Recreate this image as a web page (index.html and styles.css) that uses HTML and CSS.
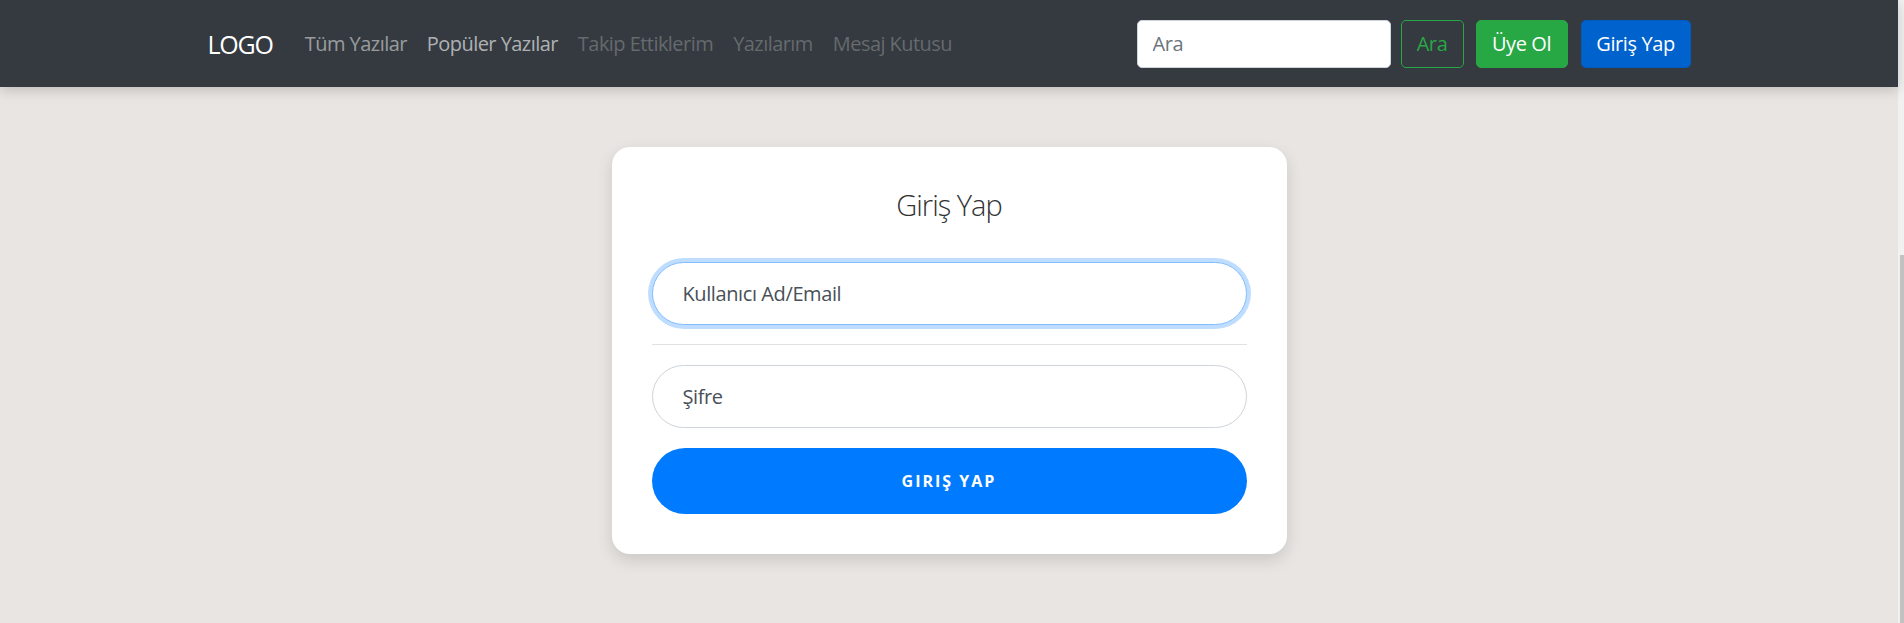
FILE: index.html
```html
<!DOCTYPE html>
<html>
<head>
<meta charset="utf-8">
<title>Giriş Yap</title>
<link rel="stylesheet" href="styles.css">
</head>
<body>
<div class="page">
  <header class="navbar">
    <div class="nav-inner">
      <a class="brand" href="#">LOGO</a>
      <nav class="nav-links">
        <a class="nav-link" href="#">Tüm Yazılar</a>
        <a class="nav-link nav-link-hover" href="#">Popüler Yazılar</a>
        <a class="nav-link nav-link-disabled" href="#">Takip Ettiklerim</a>
        <a class="nav-link nav-link-disabled" href="#">Yazılarım</a>
        <a class="nav-link nav-link-disabled" href="#">Mesaj Kutusu</a>
      </nav>
      <form class="nav-search">
        <input class="search-input" type="text" placeholder="Ara">
        <button class="btn btn-outline-success" type="button">Ara</button>
      </form>
      <div class="nav-actions">
        <button class="btn btn-success" type="button">Üye Ol</button>
        <button class="btn btn-primary-dark" type="button">Giriş Yap</button>
      </div>
    </div>
  </header>
  <main class="content">
    <section class="login-card">
      <h3 class="login-title">Giriş Yap</h3>
      <input class="field field-focus" type="text" placeholder="Kullanıcı Ad/Email">
      <hr class="divider">
      <input class="field" type="password" placeholder="Şifre">
      <button class="login-btn" type="button">Giriş Yap</button>
    </section>
  </main>
</div>
<div class="scrollbar"><div class="scroll-thumb"></div></div>
</body>
</html>
```
FILE: styles.css
```css
* { box-sizing: border-box; }
html, body { height: 100%; }
body {
  margin: 0;
  display: flex;
  overflow: hidden;
  font-family: "Open Sans", "Noto Sans", sans-serif;
  background: #e8e5e2;
  color: #212529;
}
.page {
  flex: 1;
  min-width: 0;
  height: 100%;
  background: #e8e5e2;
}
.scrollbar {
  width: 6px;
  flex: none;
  background: #f1f1f1;
  display: flex;
  flex-direction: column;
  align-items: flex-end;
  padding-top: 255px;
}
.scroll-thumb {
  width: 4px;
  flex: 1;
  background: #c1c1c1;
}
.navbar {
  height: 87px;
  background: #343a40;
  box-shadow: 0 3px 12px rgba(0, 0, 0, 0.18);
  position: relative;
  z-index: 1;
}
.nav-inner {
  max-width: 1483px;
  height: 100%;
  margin: 0 auto;
  display: flex;
  align-items: center;
}
.brand {
  color: #fff;
  text-decoration: none;
  font-size: 25px;
  letter-spacing: -1.2px;
  margin-right: 22px;
}
.nav-links {
  display: flex;
  flex: 1;
}
.nav-link {
  color: rgba(255, 255, 255, 0.5);
  text-decoration: none;
  font-size: 20px;
  letter-spacing: -0.55px;
  padding: 0 10px;
}
.nav-link-hover { color: rgba(255, 255, 255, 0.62); }
.nav-link-disabled { color: rgba(255, 255, 255, 0.25); }
.nav-search {
  display: flex;
  align-items: center;
  margin: 0;
}
.search-input {
  width: 254px;
  height: 48px;
  border: 1px solid #ced4da;
  border-radius: 5px;
  padding: 0 15px;
  font-family: inherit;
  font-size: 20px;
  letter-spacing: -0.4px;
  color: #495057;
  margin-right: 10px;
}
.search-input::placeholder { color: #6c757d; }
.btn {
  height: 48px;
  border: 1px solid transparent;
  border-radius: 5px;
  padding: 0;
  font-family: inherit;
  font-size: 20px;
  letter-spacing: -0.4px;
  color: #fff;
  cursor: pointer;
}
.btn-outline-success {
  background: transparent;
  color: #28a745;
  border-color: #28a745;
  width: 63px;
}
.nav-actions {
  display: flex;
  gap: 13px;
  margin-left: 12px;
}
.btn-success { background: #28a745; border-color: #28a745; width: 92px; }
.btn-primary-dark { background: #0062cc; border-color: #005cbf; width: 110px; }

.content {
  padding-top: 60px;
}
.login-card {
  width: 675px;
  margin: 0 auto;
  background: #fff;
  border-radius: 18px;
  padding: 40px;
  box-shadow: 0 6px 16px rgba(0, 0, 0, 0.13);
  display: flex;
  flex-direction: column;
}
.login-title {
  margin: 0 0 39px;
  height: 36px;
  line-height: 36px;
  text-align: center;
  font-size: 29px;
  font-weight: 300;
  letter-spacing: -1px;
  color: #333;
}
.field {
  width: 100%;
  height: 63px;
  border: 1px solid #ced4da;
  border-radius: 32px;
  padding: 0 30px;
  font-family: inherit;
  font-size: 20px;
  letter-spacing: -0.4px;
  color: #495057;
  background: #fff;
  outline: none;
}
.field::placeholder { color: #495057; }
.field-focus {
  border-color: #80bdff;
  box-shadow: 0 0 0 4px rgba(0, 123, 255, 0.25);
}
.divider {
  border: 0;
  border-top: 1px solid #e2e2e2;
  margin: 19px 0 20px;
}
.login-btn {
  margin-top: 20px;
  height: 66px;
  border: 0;
  border-radius: 33px;
  background: #007bff;
  color: #fff;
  font-family: inherit;
  font-size: 16px;
  font-weight: 700;
  text-transform: uppercase;
  letter-spacing: 2px;
  cursor: pointer;
}
```
